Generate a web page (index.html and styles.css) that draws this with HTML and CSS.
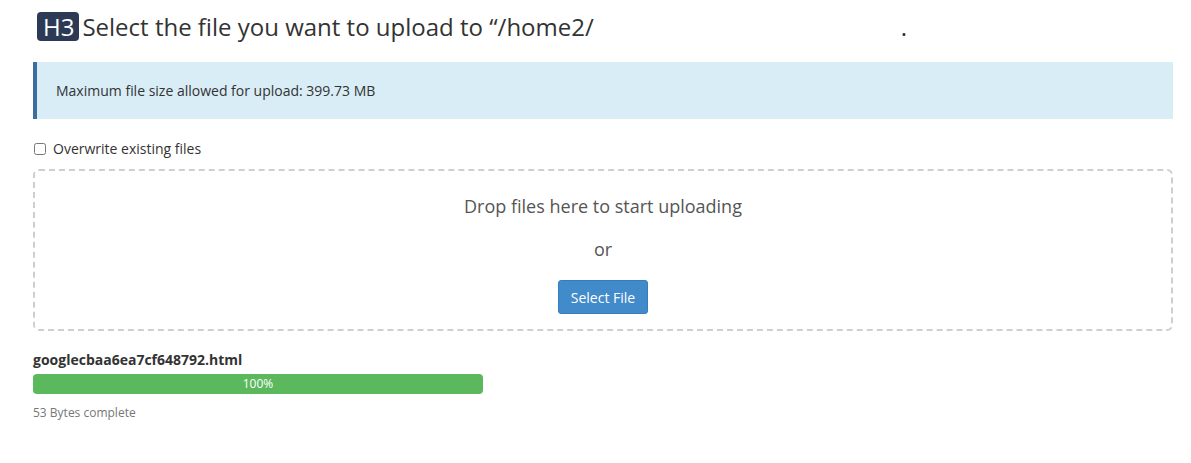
FILE: index.html
```html
<!DOCTYPE html>
<html lang="en">
<head>
    <meta charset="UTF-8">
    <title>Upload Files</title>
    <link rel="stylesheet" href="styles.css">
</head>
<body>
    <div class="page">
        <h3 class="title"><span class="tag">H3</span>Select the file you want to upload to “/home2/<span class="redacted"></span>.</h3>

        <div class="alert">Maximum file size allowed for upload: 399.73 MB</div>

        <label class="overwrite">
            <input type="checkbox"> Overwrite existing files
        </label>

        <div class="dropzone">
            <div class="drop-text">Drop files here to start uploading</div>
            <div class="drop-text">or</div>
            <button class="btn">Select File</button>
        </div>

        <div class="file">
            <div class="file-name">googlecbaa6ea7cf648792.html</div>
            <div class="progress">
                <div class="progress-bar" style="width: 100%">100%</div>
            </div>
            <div class="file-status">53 Bytes complete</div>
        </div>
    </div>
</body>
</html>
```

FILE: styles.css
```css
body {
    margin: 0;
    font-family: 'Open Sans', 'Noto Sans', sans-serif;
    color: #333;
    background-color: #fff;
}
.page {
    width: 1140px;
    padding: 0 0 0 33px;
}
.title {
    margin: 12px 0 0 4px;
    font-size: 24px;
    font-weight: 400;
    line-height: 29px;
    display: flex;
    align-items: center;
}
.tag {
    display: inline-block;
    background-color: #2c3a55;
    color: #fff;
    border-radius: 4px;
    padding: 0 5px 0 6px;
    margin-right: 3px;
    height: 29px;
    line-height: 29px;
}
.redacted {
    display: inline-block;
    width: 307px;
}
.alert {
    margin-top: 21px;
    background-color: #d9edf7;
    border-left: 4px solid #3b6e9b;
    padding: 18px 19px;
    font-size: 14px;
    line-height: 21px;
}
.overwrite {
    display: flex;
    align-items: center;
    margin-top: 21px;
    font-size: 14px;
    line-height: 17px;
}
.overwrite input {
    margin: 0 7px 0 1px;
    width: 12px;
    height: 12px;
}
.dropzone {
    margin-top: 12px;
    border: 2px dashed #cfcfcf;
    border-radius: 6px;
    text-align: center;
    padding: 23px 0 15px;
    height: 120px;
}
.drop-text {
    font-size: 18px;
    line-height: 24px;
    color: #555;
    margin-bottom: 19px;
}
.btn {
    font-family: 'Open Sans', 'Noto Sans', sans-serif;
    background-color: #428bca;
    border: 1px solid #357ebd;
    color: #fff;
    font-size: 14px;
    padding: 6px 12px;
    height: 34px;
    border-radius: 3px;
}
.file {
    margin-top: 19px;
}
.file-name {
    font-size: 14px;
    font-weight: 700;
    line-height: 19px;
}
.progress {
    width: 450px;
    height: 20px;
    margin-top: 5px;
    background-color: #f5f5f5;
    border-radius: 4px;
    overflow: hidden;
}
.progress-bar {
    height: 20px;
    background-color: #5cb85c;
    color: #fff;
    font-size: 12px;
    line-height: 20px;
    text-align: center;
}
.file-status {
    font-size: 12px;
    color: #777;
    margin-top: 10px;
}
```
